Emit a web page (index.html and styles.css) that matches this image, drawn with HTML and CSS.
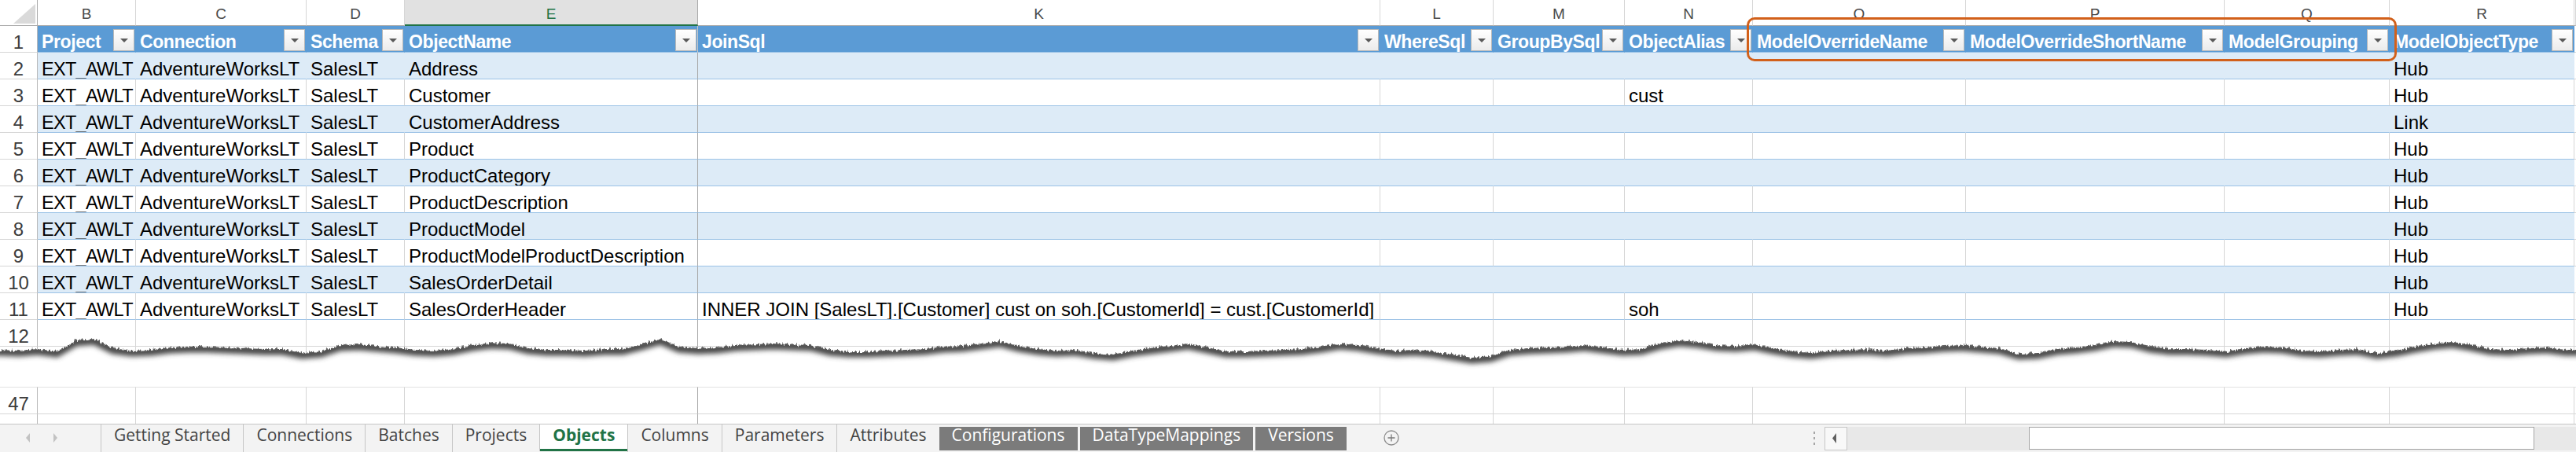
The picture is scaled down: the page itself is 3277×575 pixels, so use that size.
FILE: index.html
```html
<!DOCTYPE html>
<html>
<head>
<meta charset="utf-8">
<link rel="stylesheet" href="styles.css">
</head>
<body>
<div class="sheet">
  <div class="row colhead">
    <div class="c corner"><svg width="47" height="32" viewBox="0 0 47 32"><polygon points="45,5 45,30 17,30" fill="#dadada"/></svg></div>
    <div class="c ch">B</div><div class="c ch">C</div><div class="c ch">D</div><div class="c ch sel">E</div>
    <div class="c ch e2">K</div><div class="c ch">L</div><div class="c ch">M</div><div class="c ch">N</div>
    <div class="c ch">O</div><div class="c ch">P</div><div class="c ch">Q</div><div class="c ch">R</div><div class="c ch"></div>
  </div>
  <div class="row hrow">
    <div class="c rn">1</div>
    <div class="c t h"><span class="ht">Project</span><span class="dd"></span></div>
    <div class="c t h"><span class="ht">Connection</span><span class="dd"></span></div>
    <div class="c t h"><span class="ht">Schema</span><span class="dd"></span></div>
    <div class="c t h e"><span class="ht">ObjectName</span><span class="dd"></span></div>
    <div class="c t h"><span class="ht">JoinSql</span><span class="dd"></span></div>
    <div class="c t h"><span class="ht">WhereSql</span><span class="dd"></span></div>
    <div class="c t h"><span class="ht">GroupBySql</span><span class="dd"></span></div>
    <div class="c t h"><span class="ht">ObjectAlias</span><span class="dd"></span></div>
    <div class="c t h"><span class="ht">ModelOverrideName</span><span class="dd"></span></div>
    <div class="c t h"><span class="ht">ModelOverrideShortName</span><span class="dd"></span></div>
    <div class="c t h"><span class="ht">ModelGrouping</span><span class="dd"></span></div>
    <div class="c t h"><span class="ht">ModelObjectType</span><span class="dd"></span></div>
    <div class="c"></div>
  </div>
  <div class="row trow band">
    <div class="c rn">2</div><div class="c t b">EXT_AWLT</div><div class="c t">AdventureWorksLT</div><div class="c t">SalesLT</div><div class="c t e">Address</div>
    <div class="c t"></div><div class="c t"></div><div class="c t"></div><div class="c t"></div><div class="c t"></div><div class="c t"></div><div class="c t"></div><div class="c t">Hub</div><div class="c"></div>
  </div>
  <div class="row trow">
    <div class="c rn">3</div><div class="c t b">EXT_AWLT</div><div class="c t">AdventureWorksLT</div><div class="c t">SalesLT</div><div class="c t e">Customer</div>
    <div class="c t"></div><div class="c t"></div><div class="c t"></div><div class="c t">cust</div><div class="c t"></div><div class="c t"></div><div class="c t"></div><div class="c t">Hub</div><div class="c"></div>
  </div>
  <div class="row trow band">
    <div class="c rn">4</div><div class="c t b">EXT_AWLT</div><div class="c t">AdventureWorksLT</div><div class="c t">SalesLT</div><div class="c t e">CustomerAddress</div>
    <div class="c t"></div><div class="c t"></div><div class="c t"></div><div class="c t"></div><div class="c t"></div><div class="c t"></div><div class="c t"></div><div class="c t">Link</div><div class="c"></div>
  </div>
  <div class="row trow">
    <div class="c rn">5</div><div class="c t b">EXT_AWLT</div><div class="c t">AdventureWorksLT</div><div class="c t">SalesLT</div><div class="c t e">Product</div>
    <div class="c t"></div><div class="c t"></div><div class="c t"></div><div class="c t"></div><div class="c t"></div><div class="c t"></div><div class="c t"></div><div class="c t">Hub</div><div class="c"></div>
  </div>
  <div class="row trow band">
    <div class="c rn">6</div><div class="c t b">EXT_AWLT</div><div class="c t">AdventureWorksLT</div><div class="c t">SalesLT</div><div class="c t e">ProductCategory</div>
    <div class="c t"></div><div class="c t"></div><div class="c t"></div><div class="c t"></div><div class="c t"></div><div class="c t"></div><div class="c t"></div><div class="c t">Hub</div><div class="c"></div>
  </div>
  <div class="row trow">
    <div class="c rn">7</div><div class="c t b">EXT_AWLT</div><div class="c t">AdventureWorksLT</div><div class="c t">SalesLT</div><div class="c t e">ProductDescription</div>
    <div class="c t"></div><div class="c t"></div><div class="c t"></div><div class="c t"></div><div class="c t"></div><div class="c t"></div><div class="c t"></div><div class="c t">Hub</div><div class="c"></div>
  </div>
  <div class="row trow band">
    <div class="c rn">8</div><div class="c t b">EXT_AWLT</div><div class="c t">AdventureWorksLT</div><div class="c t">SalesLT</div><div class="c t e">ProductModel</div>
    <div class="c t"></div><div class="c t"></div><div class="c t"></div><div class="c t"></div><div class="c t"></div><div class="c t"></div><div class="c t"></div><div class="c t">Hub</div><div class="c"></div>
  </div>
  <div class="row trow">
    <div class="c rn">9</div><div class="c t b">EXT_AWLT</div><div class="c t">AdventureWorksLT</div><div class="c t">SalesLT</div><div class="c t e">ProductModelProductDescription</div>
    <div class="c t"></div><div class="c t"></div><div class="c t"></div><div class="c t"></div><div class="c t"></div><div class="c t"></div><div class="c t"></div><div class="c t">Hub</div><div class="c"></div>
  </div>
  <div class="row trow band">
    <div class="c rn">10</div><div class="c t b">EXT_AWLT</div><div class="c t">AdventureWorksLT</div><div class="c t">SalesLT</div><div class="c t e">SalesOrderDetail</div>
    <div class="c t"></div><div class="c t"></div><div class="c t"></div><div class="c t"></div><div class="c t"></div><div class="c t"></div><div class="c t"></div><div class="c t">Hub</div><div class="c"></div>
  </div>
  <div class="row trow">
    <div class="c rn">11</div><div class="c t b">EXT_AWLT</div><div class="c t">AdventureWorksLT</div><div class="c t">SalesLT</div><div class="c t e">SalesOrderHeader</div>
    <div class="c t">INNER JOIN [SalesLT].[Customer] cust on soh.[CustomerId] = cust.[CustomerId]</div><div class="c t"></div><div class="c t"></div><div class="c t">soh</div><div class="c t"></div><div class="c t"></div><div class="c t"></div><div class="c t">Hub</div><div class="c"></div>
  </div>
  <div class="row">
    <div class="c rn">12</div><div class="c"></div><div class="c"></div><div class="c"></div><div class="c e"></div><div class="c"></div><div class="c"></div><div class="c"></div><div class="c"></div><div class="c"></div><div class="c"></div><div class="c"></div><div class="c"></div><div class="c"></div>
  </div>
  <div class="row gap">
    <div class="c rn"></div><div class="c"></div><div class="c"></div><div class="c"></div><div class="c e"></div><div class="c"></div><div class="c"></div><div class="c"></div><div class="c"></div><div class="c"></div><div class="c"></div><div class="c"></div><div class="c"></div><div class="c"></div>
  </div>
  <div class="row">
    <div class="c rn">47</div><div class="c"></div><div class="c"></div><div class="c"></div><div class="c e"></div><div class="c"></div><div class="c"></div><div class="c"></div><div class="c"></div><div class="c"></div><div class="c"></div><div class="c"></div><div class="c"></div><div class="c"></div>
  </div>
  <div class="row">
    <div class="c rn">48</div><div class="c"></div><div class="c"></div><div class="c"></div><div class="c e"></div><div class="c"></div><div class="c"></div><div class="c"></div><div class="c"></div><div class="c"></div><div class="c"></div><div class="c"></div><div class="c"></div><div class="c"></div>
  </div>
</div>

<svg class="tear" width="3277" height="67" viewBox="0 0 3277 67">
  <defs>
    <filter id="rough" filterUnits="userSpaceOnUse" x="-20" y="-20" width="3340" height="140">
      <feTurbulence type="fractalNoise" baseFrequency="0.4 0.1" numOctaves="2" seed="7" result="n"/>
      <feDisplacementMap in="SourceGraphic" in2="n" scale="8" xChannelSelector="R" yChannelSelector="G"/>
    </filter>
    <filter id="soft" filterUnits="userSpaceOnUse" x="-20" y="-20" width="3340" height="140">
      <feGaussianBlur stdDeviation="3"/>
    </filter>
    <mask id="below" maskUnits="userSpaceOnUse" x="-20" y="-20" width="3340" height="140">
      <path filter="url(#rough)" fill="#ffffff" d="M-20,20 L0,20 24,21 48,19 72,22 96,8 120,6 144,18 168,21 192,20 216,17 240,16 264,16 288,17 312,18 336,19 360,19 384,24 408,22 432,14 456,13 480,15 504,17 528,20 552,21 576,19 600,14 624,11 648,12 672,18 696,20 720,20 744,21 768,19 792,19 816,13 840,6 864,16 888,18 912,17 936,14 960,13 984,12 1008,13 1032,14 1056,20 1080,22 1104,22 1128,21 1152,20 1176,19 1200,16 1224,15 1248,12 1272,9 1296,15 1320,19 1344,21 1368,20 1392,24 1416,26 1440,21 1464,18 1488,15 1512,12 1536,17 1560,22 1584,22 1608,21 1632,20 1656,19 1680,16 1704,12 1728,14 1752,18 1776,21 1800,20 1824,22 1848,26 1872,30 1896,28 1920,20 1944,18 1968,17 1992,16 2016,14 2040,17 2064,20 2088,19 2112,12 2136,8 2160,10 2184,14 2208,15 2232,13 2256,18 2280,22 2304,24 2328,21 2352,20 2376,19 2400,21 2424,18 2448,17 2472,15 2496,14 2520,16 2544,18 2568,25 2592,24 2616,19 2640,17 2664,14 2688,9 2712,10 2736,16 2760,19 2784,19 2808,20 2832,22 2856,18 2880,16 2904,17 2928,21 2952,22 2976,20 3000,19 3024,24 3048,21 3072,16 3096,12 3120,10 3144,14 3168,19 3192,20 3216,18 3240,17 3264,20 3300,20 L3300,115 L-20,115 Z"/>
    </mask>
  </defs>
  <g mask="url(#below)">
    <rect x="-20" y="0" width="3340" height="115" fill="#ffffff"/>
    <path filter="url(#soft)" transform="translate(0,2)" fill="none" stroke="#444444" stroke-width="11" d="M-20,20 L0,20 24,21 48,19 72,22 96,8 120,6 144,18 168,21 192,20 216,17 240,16 264,16 288,17 312,18 336,19 360,19 384,24 408,22 432,14 456,13 480,15 504,17 528,20 552,21 576,19 600,14 624,11 648,12 672,18 696,20 720,20 744,21 768,19 792,19 816,13 840,6 864,16 888,18 912,17 936,14 960,13 984,12 1008,13 1032,14 1056,20 1080,22 1104,22 1128,21 1152,20 1176,19 1200,16 1224,15 1248,12 1272,9 1296,15 1320,19 1344,21 1368,20 1392,24 1416,26 1440,21 1464,18 1488,15 1512,12 1536,17 1560,22 1584,22 1608,21 1632,20 1656,19 1680,16 1704,12 1728,14 1752,18 1776,21 1800,20 1824,22 1848,26 1872,30 1896,28 1920,20 1944,18 1968,17 1992,16 2016,14 2040,17 2064,20 2088,19 2112,12 2136,8 2160,10 2184,14 2208,15 2232,13 2256,18 2280,22 2304,24 2328,21 2352,20 2376,19 2400,21 2424,18 2448,17 2472,15 2496,14 2520,16 2544,18 2568,25 2592,24 2616,19 2640,17 2664,14 2688,9 2712,10 2736,16 2760,19 2784,19 2808,20 2832,22 2856,18 2880,16 2904,17 2928,21 2952,22 2976,20 3000,19 3024,24 3048,21 3072,16 3096,12 3120,10 3144,14 3168,19 3192,20 3216,18 3240,17 3264,20 3300,20"/>
  </g>
</svg>

<div class="frame"></div>

<div class="tabbar">
  <div class="nav">
    <svg width="128" height="35" viewBox="0 0 128 35"><polygon points="38,11 33,17 38,23" fill="#c2c2c2"/><polygon points="68,11 73,17 68,23" fill="#c2c2c2"/></svg>
  </div>
  <div class="tab">Getting Started</div>
  <div class="tab">Connections</div>
  <div class="tab">Batches</div>
  <div class="tab">Projects</div>
  <div class="tab active">Objects</div>
  <div class="tab">Columns</div>
  <div class="tab">Parameters</div>
  <div class="tab">Attributes</div>
  <div class="tab dark">Configurations</div>
  <div class="tab dark">DataTypeMappings</div>
  <div class="tab dark last">Versions</div>
  <div class="add">
    <svg width="22" height="22" viewBox="0 0 22 22"><circle cx="11" cy="11" r="9" fill="none" stroke="#8c8c8c" stroke-width="1.3"/><path d="M11,6.5 V15.5 M6.5,11 H15.5" stroke="#7a7a7a" stroke-width="1.3"/></svg>
  </div>
  <div class="fill"></div>
  <div class="split"><i></i><i></i><i></i></div>
  <div class="hscroll">
    <div class="sbtn"><svg width="27" height="28" viewBox="0 0 27 28"><polygon points="14,7 9,13.5 14,20" fill="#606060"/></svg></div>
    <div class="thumb"></div>
  </div>
</div>
</body>
</html>
```

FILE: styles.css
```css
* { box-sizing: border-box; }
html, body { margin: 0; padding: 0; }
body {
  width: 3277px;
  height: 575px;
  overflow: hidden;
  position: relative;
  background: #ffffff;
  font-family: "Liberation Sans", Arial, sans-serif;
  color: #000;
}

.sheet {
  height: 539px;
  overflow: hidden;
  display: flex;
  flex-direction: column;
}

.row {
  display: grid;
  grid-template-columns: 48px 125px 217px 125px 373px 868px 144px 167px 163px 271px 329px 210px 235px 1fr;
  height: 34px;
  flex: none;
}

.c {
  border-right: 1px solid #d6d6d6;
  border-bottom: 1px solid #d6d6d6;
  font-size: 24px;
  line-height: 26px;
  padding: 8px 5px 0 5px;
  white-space: nowrap;
  overflow: hidden;
  background: #ffffff;
}

/* column letter header */
.colhead { height: 33px; }
.colhead .c {
  border-bottom: 1px solid #ababab;
  border-right: 1px solid #d6d6d6;
  font-size: 19px;
  line-height: 30px;
  padding: 3px 0 0 0;
  text-align: center;
  color: #4a4a4a;
}
.colhead .corner { padding: 0; border-right-color: #ababab; }
.colhead .corner svg { display: block; }
.colhead .sel {
  background: #e1e1e1;
  color: #217346;
  border-bottom: 2px solid #217346;
  border-right-color: #a9a9a9;
}

/* row numbers */
.rn {
  text-align: center;
  color: #3c3c3c;
  padding-left: 0;
  padding-right: 0;
  border-right-color: #b9b9b9;
}

/* table */
.trow .t { border-bottom-color: #9bc2e6; }
.band .t { background: #ddebf7; border-right-color: #ddebf7; }
.row .e { border-right-color: #a8a8a8; }
.trow .b {
  font-size: 23.5px;
  letter-spacing: -0.7px;
  padding-right: 0;
}

.hrow .t {
  background: #5b9bd5;
  color: #ffffff;
  font-weight: bold;
  font-size: 23px;
  letter-spacing: -0.4px;
  border-right-color: #5b9bd5;
  border-bottom-color: #9bc2e6;
  display: flex;
  align-items: flex-start;
  padding: 7px 1px 0 5px;
}
.hrow .t.e { border-right-color: #c9c9c9; }
.ht {
  flex: 1;
  min-width: 0;
  overflow: hidden;
  line-height: 26px;
}
.dd {
  flex: none;
  width: 27px;
  height: 28px;
  margin-top: -3px;
  border: 1px solid #b8b8b8;
  background: linear-gradient(#ffffff, #ebebeb);
  display: flex;
  align-items: center;
  justify-content: center;
}
.dd::after {
  content: "";
  width: 0;
  height: 0;
  border-left: 5px solid transparent;
  border-right: 5px solid transparent;
  border-top: 5px solid #5a5a5a;
  margin-top: 1px;
}

/* torn section */
.gap { height: 52px; }
.gap .c { border-bottom-color: #e2e2e2; }

.tear {
  position: absolute;
  left: 0;
  top: 425px;
  display: block;
}

/* highlight frame */
.frame {
  position: absolute;
  left: 2222px;
  top: 22px;
  width: 827px;
  height: 56px;
  border: 3px solid #d2601a;
  border-radius: 10px;
}

/* sheet tabs */
.tabbar {
  height: 36px;
  border-top: 1px solid #c6c6c6;
  background: #f3f3f3;
  display: flex;
  font-family: "Open Sans", "Liberation Sans", sans-serif;
  font-size: 21px;
  color: #444444;
}
.nav { width: 128px; flex: none; }
.nav svg { display: block; }
.tab {
  flex: none;
  height: 35px;
  line-height: 27px;
  padding: 0 16px;
  border-left: 1px solid #c6c6c6;
  white-space: nowrap;
}
.tab.active {
  background: #ffffff;
  color: #217346;
  font-weight: bold;
  box-shadow: inset 0 -3px 0 #217346;
  height: 34px;
}
.tab.dark {
  border-left: none;
  margin: 3px 3px 0 0;
  height: 30px;
  line-height: 21px;
  background: #7b7b7b;
  color: #ffffff;
}
.tab.dark.last { margin-right: 0; }
.add {
  flex: none;
  margin-left: 46px;
  padding-top: 6px;
}
.add svg { display: block; }
.fill { flex: 1; }
.split {
  flex: none;
  width: 26px;
  display: flex;
  flex-direction: column;
  align-items: center;
  padding-top: 9px;
  gap: 4px;
}
.split i {
  display: block;
  width: 2px;
  height: 3px;
  background: #a6a6a6;
}
.hscroll {
  flex: none;
  width: 956px;
  height: 30px;
  margin-top: 3px;
  background: #e8e8e8;
  display: flex;
}
.sbtn {
  flex: none;
  width: 29px;
  height: 30px;
  border: 1px solid #c6c6c6;
  background: #f8f8f8;
}
.sbtn svg { display: block; }
.thumb {
  flex: none;
  margin-left: 231px;
  width: 643px;
  height: 29px;
  border: 1px solid #a6a6a6;
  background: #ffffff;
}
```
